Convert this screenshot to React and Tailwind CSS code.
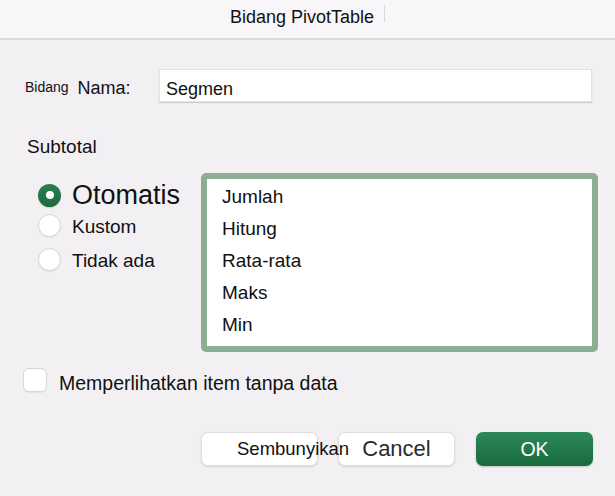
import React from 'react';

const font = { fontFamily: '"Liberation Sans", Arial, sans-serif' };

function Radio({ checked }) {
  if (checked) {
    return (
      <div className="w-[23px] h-[23px] rounded-full bg-gradient-to-b from-[#2a7f51] to-[#1a6a3e] flex items-center justify-center shrink-0 shadow-[0_1px_1px_rgba(0,0,0,0.15)]">
        <div className="w-[8px] h-[8px] rounded-full bg-white" />
      </div>
    );
  }
  return (
    <div className="w-[23px] h-[23px] rounded-full bg-white border border-[#d6d4d6] shrink-0 shadow-[0_1px_1px_rgba(0,0,0,0.06)]" />
  );
}

export default function App() {
  const items = ['Jumlah', 'Hitung', 'Rata-rata', 'Maks', 'Min'];

  return (
    <div className="w-full h-screen bg-[#f2f0f3] text-[#111] overflow-hidden" style={font}>
      {/* title bar */}
      <div className="h-[40px] bg-[#f9f6f9] border-b-2 border-[#dddbdd] flex justify-center items-start pt-[7px] gap-[10px]">
        <span className="text-[18px] leading-[20px] text-[#111]">Bidang PivotTable</span>
        <span className="w-px h-[17px] bg-[#d9d7d9] -mt-[2px]" />
      </div>

      {/* nama row */}
      <div className="flex items-start mt-[29px] pl-[25px] pr-[23px]">
        <div className="w-[134px] flex items-start shrink-0">
          <span className="text-[14px] leading-[20px] mt-[8px]">Bidang</span>
          <span className="text-[18px] leading-[20px] mt-[9px] ml-[9px]">Nama:</span>
        </div>
        <div className="flex-1 h-[33px] bg-white border border-[#e4e2e4] shadow-[0_1px_1px_rgba(0,0,0,0.14)] pl-[6px] pt-[8px]">
          <span className="text-[18px] leading-[20px]">Segmen</span>
        </div>
      </div>

      {/* subtotal */}
      <div className="mt-[34px] pl-[27px] text-[19px] leading-[22px]">Subtotal</div>

      <div className="flex items-start mt-[15px]">
        <div className="w-[201px] shrink-0 pl-[38px] pt-[10px] flex flex-col">
          <div className="flex items-center h-[24px] gap-[11px]">
            <Radio checked />
            <span className="text-[27px] leading-[28px] whitespace-nowrap">Otomatis</span>
          </div>
          <div className="flex items-center h-[24px] gap-[11px] mt-[6px]">
            <Radio />
            <span className="text-[19px] leading-[22px] pt-[4px] whitespace-nowrap">Kustom</span>
          </div>
          <div className="flex items-center h-[24px] gap-[11px] mt-[10px]">
            <Radio />
            <span className="text-[19px] leading-[22px] pt-[4px] whitespace-nowrap">Tidak ada</span>
          </div>
        </div>
        <div className="w-[397px] h-[179px] border-[6px] border-[#8caf93] rounded-[5px] bg-white pl-[15px] pt-[2px] flex flex-col">
          {items.map((it) => (
            <div key={it} className="h-[32px] text-[19px] leading-[32px]">
              {it}
            </div>
          ))}
        </div>
      </div>

      {/* checkbox */}
      <div className="flex items-start mt-[16px] pl-[23px]">
        <div className="w-[24px] h-[24px] rounded-[6px] bg-white border border-[#d8d6d8] shadow-[0_1px_1px_rgba(0,0,0,0.06)] shrink-0" />
        <span className="ml-[12px] mt-[3px] text-[19.5px] leading-[24px] whitespace-nowrap">
          Memperlihatkan item tanpa data
        </span>
      </div>

      {/* buttons */}
      <div className="flex items-start mt-[37px] pl-[201px]">
        <div className="relative z-10 w-[117px] h-[34px] rounded-[7px] bg-white border border-[#e0dee0] shadow-[0_1px_2px_rgba(0,0,0,0.12)] flex items-center pl-[35px] whitespace-nowrap">
          <span className="text-[18.5px] leading-[22px] text-[#111]">Sembunyikan</span>
        </div>
        <div className="ml-[20px] w-[117px] h-[34px] rounded-[7px] bg-white border border-[#e0dee0] shadow-[0_1px_2px_rgba(0,0,0,0.12)] flex items-center justify-center">
          <span className="text-[22px] leading-[24px] text-[#2a2a2a]">Cancel</span>
        </div>
        <div className="ml-[21px] w-[117px] h-[34px] rounded-[7px] bg-gradient-to-b from-[#2d8858] to-[#176b3d] shadow-[0_1px_2px_rgba(0,0,0,0.2)] flex items-center justify-center">
          <span className="text-[19.5px] leading-[22px] text-white">OK</span>
        </div>
      </div>
    </div>
  );
}
